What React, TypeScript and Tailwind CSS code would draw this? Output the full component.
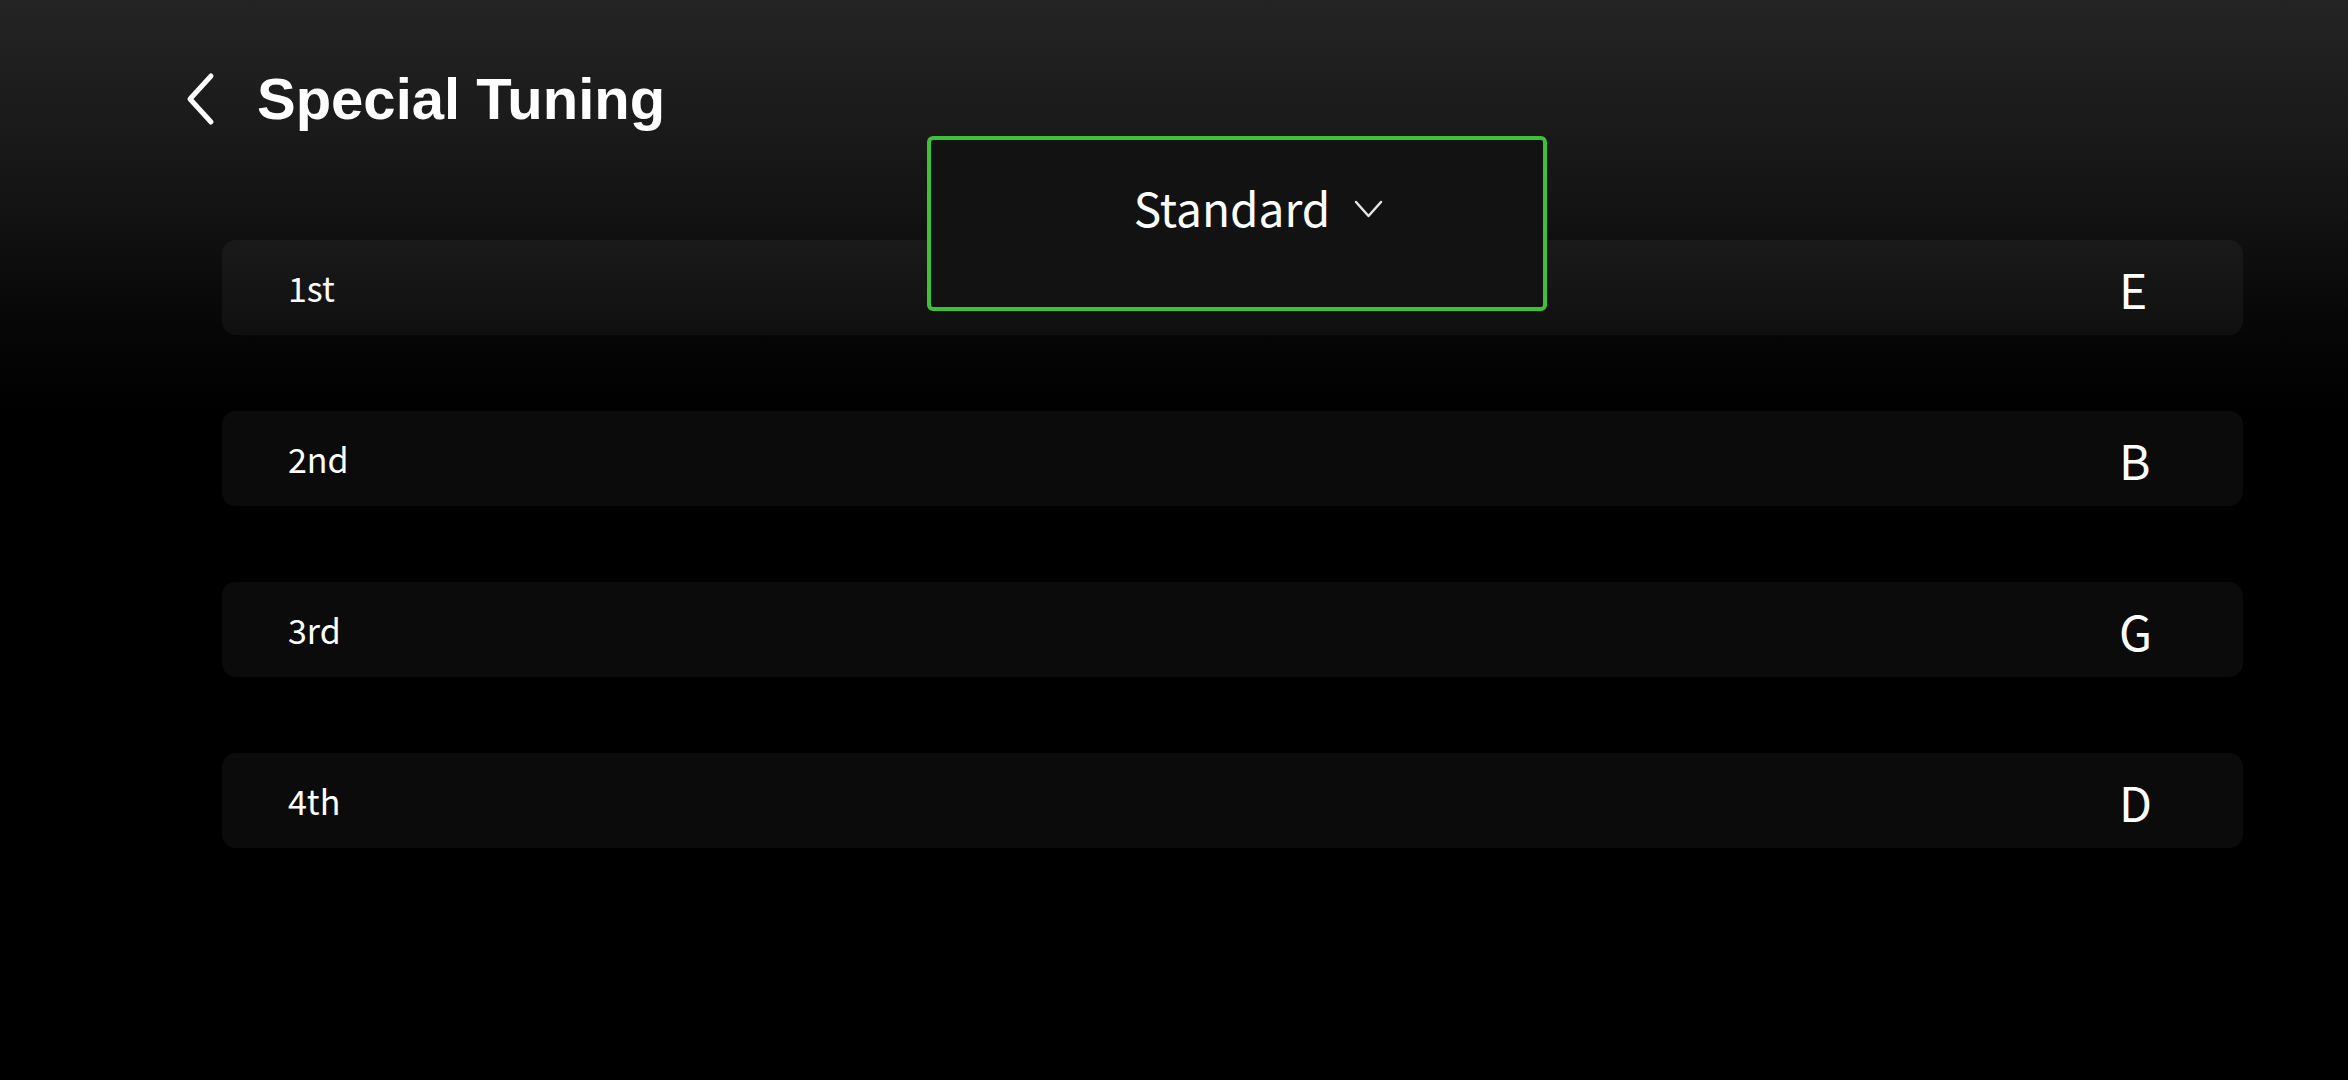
const strings = [
  { name: "1st", note: "E" },
  { name: "2nd", note: "B" },
  { name: "3rd", note: "G" },
  { name: "4th", note: "D" },
];

const BackIcon = () => (
  <svg width="32" height="56" viewBox="0 0 32 56" fill="none" className="mt-[-5px] shrink-0">
    <path d="M27 4 L6 27 L27 50" stroke="white" strokeWidth="5" strokeLinecap="round" strokeLinejoin="round" />
  </svg>
);

const ChevronDown = () => (
  <svg
    width="29"
    height="19"
    viewBox="0 0 29 19"
    fill="none"
    className="absolute left-[calc(100%+24px)] top-[16px]"
  >
    <path d="M2 2 L14.5 16 L27 2" stroke="#e5e5e5" strokeWidth="2.5" strokeLinecap="round" strokeLinejoin="round" />
  </svg>
);

const App = () => {
  return (
    <div className="relative h-[1080px] w-full overflow-hidden bg-[linear-gradient(to_bottom,#242424_0px,#141414_200px,#050505_340px,#000_420px)] font-['Noto_Sans_CJK_SC','Noto_Sans',sans-serif] text-white">
      <header className="flex h-[58px] items-start pl-[184px] pt-0 mt-[77px]">
        <BackIcon />
        <h1 className="ml-[41px] mt-[-7px] font-['Liberation_Sans',Arial,sans-serif] text-[58px] font-bold leading-none">
          Special Tuning
        </h1>
      </header>

      <div className="mt-[105px] flex flex-col gap-[76px] pl-[222px] pr-[105px]">
        {strings.map((s) => (
          <div
            key={s.name}
            className="flex h-[95px] items-center justify-between rounded-[14px] bg-white/[0.045] pl-[66px] pr-[64px]"
          >
            <span className="text-[34px] leading-none">{s.name}</span>
            <span className="w-[60px] text-[48px] leading-none">{s.note}</span>
          </div>
        ))}
      </div>

      <div className="absolute left-[927px] top-[136px] h-[175px] w-[620px] rounded-[6px] border-4 border-[#3cc23a] bg-[#121212]">
        <div className="flex justify-center pr-[10px] pt-[44px]">
          <span className="relative text-[46px] leading-none">
            Standard
            <ChevronDown />
          </span>
        </div>
      </div>
    </div>
  );
};

export default App;
